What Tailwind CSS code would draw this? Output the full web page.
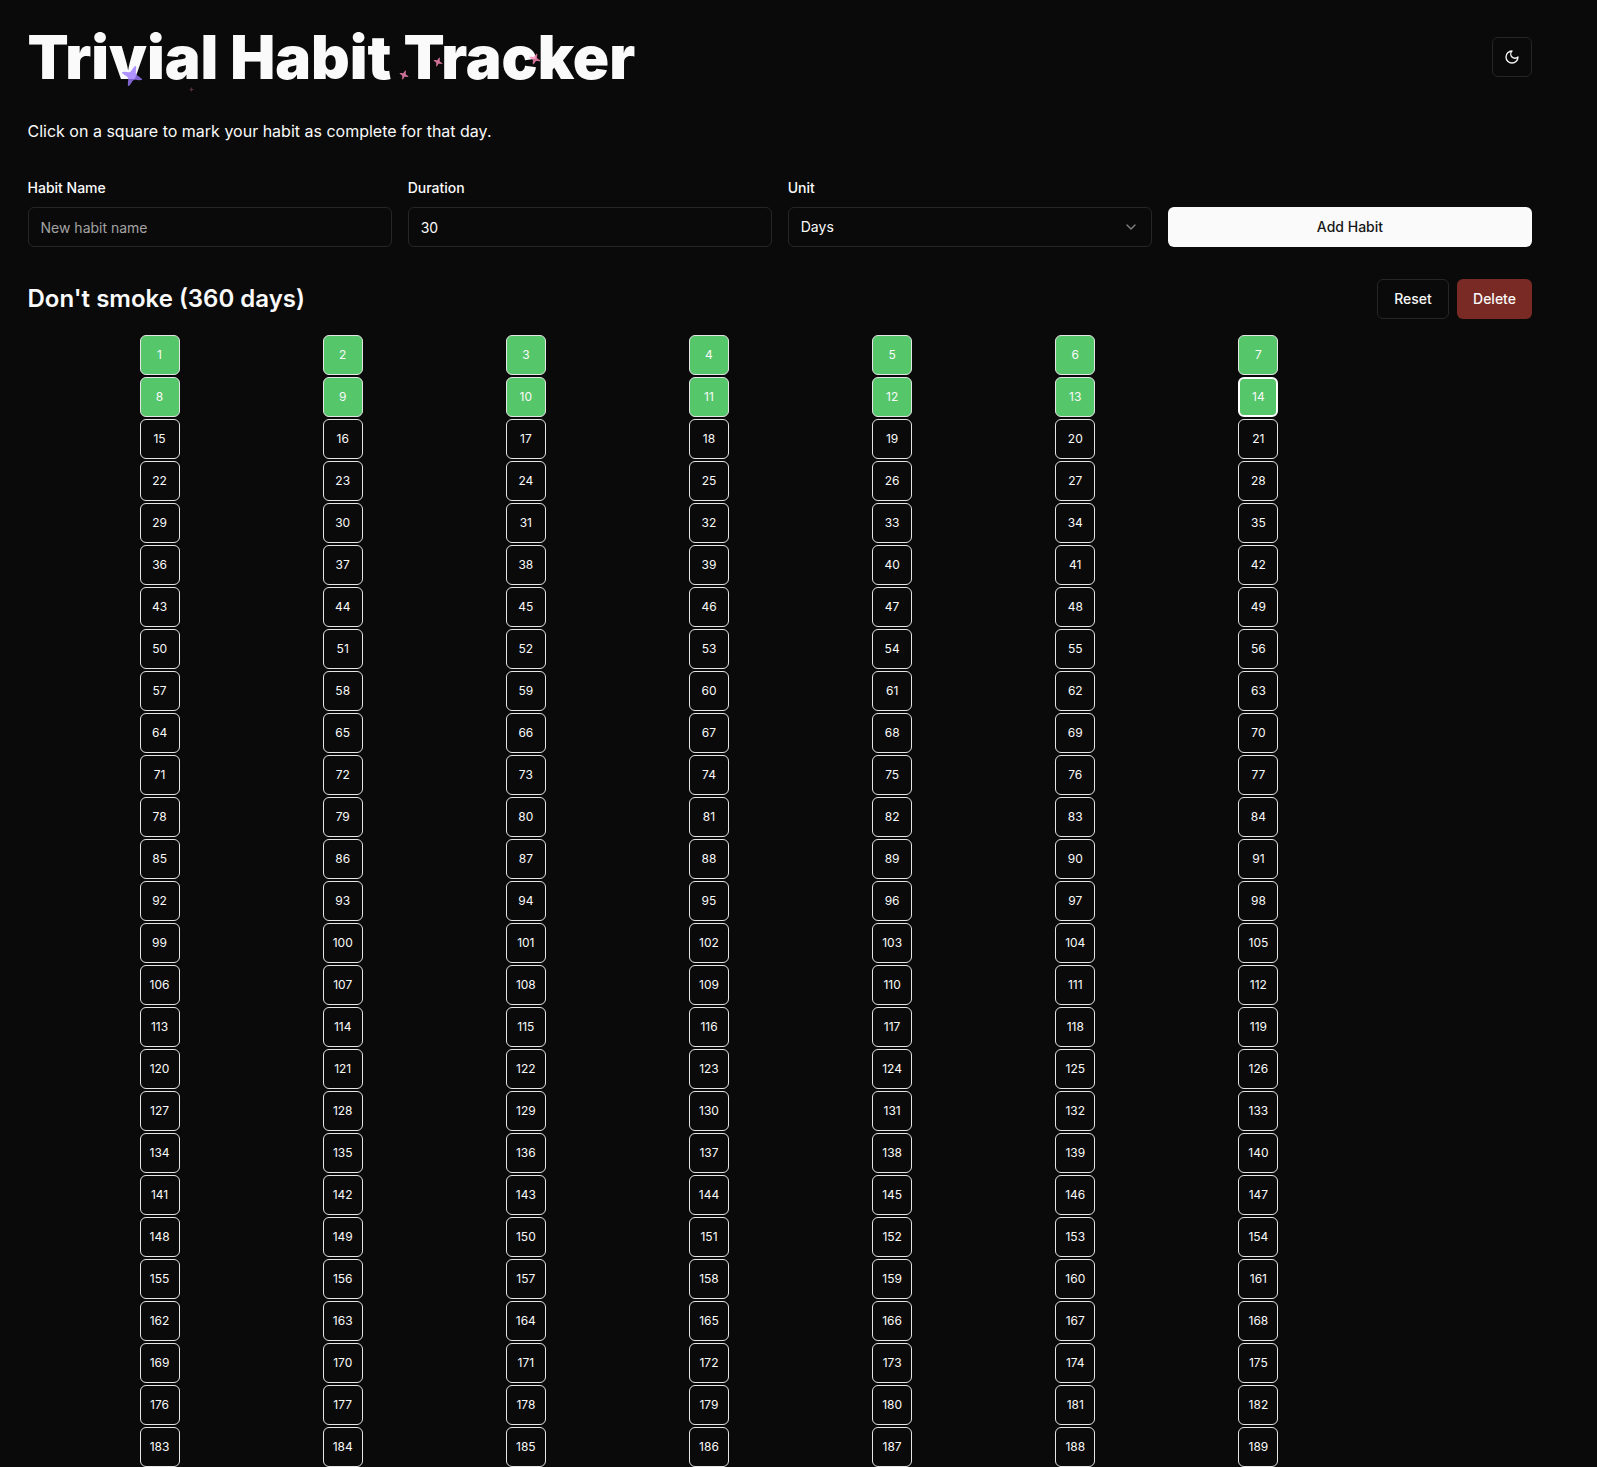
<!DOCTYPE html>
<html lang="en">
<head>
  <meta charset="UTF-8">
  <title>Trivial Habit Tracker</title>
  <meta name="viewport" content="width=device-width, initial-scale=1.0">
  <script src="https://cdn.jsdelivr.net/npm/@tailwindcss/browser@4"></script>
</head>
<body class="bg-[#0a0a0a] text-[#fafafa] font-['Inter',sans-serif] h-screen overflow-hidden">

  <div class="w-[1532px] pl-[27.5px] pt-[17px]">
    <!-- Header -->
    <div class="flex items-start justify-between">
      <div class="relative">
        <h1 class="text-6xl font-black leading-[80px] tracking-normal">Trivial Habit Tracker</h1>
        <svg class="absolute left-[93px] top-[48px] w-[22px] h-[22px] rotate-[20deg] opacity-80" viewBox="0 0 21 21" fill="#9E7AFF"><path d="M9.82531 0.843845C10.0553 0.215178 10.9446 0.215178 11.1746 0.843845L11.8618 2.72026C12.4006 4.19229 12.3916 6.39157 13.5 7.5C14.6084 8.60843 16.8077 8.59935 18.2797 9.13822L20.1561 9.82534C20.7858 10.0553 20.7858 10.9447 20.1561 11.1747L18.2797 11.8618C16.8077 12.4007 14.6084 12.3916 13.5 13.5C12.3916 14.6084 12.4006 16.8077 11.8618 18.2798L11.1746 20.1562C10.9446 20.7858 10.0553 20.7858 9.82531 20.1562L9.13819 18.2798C8.59932 16.8077 8.60843 14.6084 7.5 13.5C6.39157 12.3916 4.19225 12.4007 2.72023 11.8618L0.843814 11.1747C0.215148 10.9447 0.215148 10.0553 0.843814 9.82534L2.72023 9.13822C4.19225 8.59935 6.39157 8.60843 7.5 7.5C8.60843 6.39157 8.59932 4.19229 9.13819 2.72026L9.82531 0.843845Z"/></svg>
        <svg class="absolute left-[371px] top-[53px] w-[10px] h-[10px] rotate-[20deg] opacity-80" viewBox="0 0 21 21" fill="#FE8BBB"><path d="M9.82531 0.843845C10.0553 0.215178 10.9446 0.215178 11.1746 0.843845L11.8618 2.72026C12.4006 4.19229 12.3916 6.39157 13.5 7.5C14.6084 8.60843 16.8077 8.59935 18.2797 9.13822L20.1561 9.82534C20.7858 10.0553 20.7858 10.9447 20.1561 11.1747L18.2797 11.8618C16.8077 12.4007 14.6084 12.3916 13.5 13.5C12.3916 14.6084 12.4006 16.8077 11.8618 18.2798L11.1746 20.1562C10.9446 20.7858 10.0553 20.7858 9.82531 20.1562L9.13819 18.2798C8.59932 16.8077 8.60843 14.6084 7.5 13.5C6.39157 12.3916 4.19225 12.4007 2.72023 11.8618L0.843814 11.1747C0.215148 10.9447 0.215148 10.0553 0.843814 9.82534L2.72023 9.13822C4.19225 8.59935 6.39157 8.60843 7.5 7.5C8.60843 6.39157 8.59932 4.19229 9.13819 2.72026L9.82531 0.843845Z"/></svg>
        <svg class="absolute left-[405px] top-[40px] w-[10px] h-[10px] rotate-[20deg] opacity-80" viewBox="0 0 21 21" fill="#FE8BBB"><path d="M9.82531 0.843845C10.0553 0.215178 10.9446 0.215178 11.1746 0.843845L11.8618 2.72026C12.4006 4.19229 12.3916 6.39157 13.5 7.5C14.6084 8.60843 16.8077 8.59935 18.2797 9.13822L20.1561 9.82534C20.7858 10.0553 20.7858 10.9447 20.1561 11.1747L18.2797 11.8618C16.8077 12.4007 14.6084 12.3916 13.5 13.5C12.3916 14.6084 12.4006 16.8077 11.8618 18.2798L11.1746 20.1562C10.9446 20.7858 10.0553 20.7858 9.82531 20.1562L9.13819 18.2798C8.59932 16.8077 8.60843 14.6084 7.5 13.5C6.39157 12.3916 4.19225 12.4007 2.72023 11.8618L0.843814 11.1747C0.215148 10.9447 0.215148 10.0553 0.843814 9.82534L2.72023 9.13822C4.19225 8.59935 6.39157 8.60843 7.5 7.5C8.60843 6.39157 8.59932 4.19229 9.13819 2.72026L9.82531 0.843845Z"/></svg>
        <svg class="absolute left-[501px] top-[36px] w-[12px] h-[12px] rotate-[20deg] opacity-80" viewBox="0 0 21 21" fill="#FE8BBB"><path d="M9.82531 0.843845C10.0553 0.215178 10.9446 0.215178 11.1746 0.843845L11.8618 2.72026C12.4006 4.19229 12.3916 6.39157 13.5 7.5C14.6084 8.60843 16.8077 8.59935 18.2797 9.13822L20.1561 9.82534C20.7858 10.0553 20.7858 10.9447 20.1561 11.1747L18.2797 11.8618C16.8077 12.4007 14.6084 12.3916 13.5 13.5C12.3916 14.6084 12.4006 16.8077 11.8618 18.2798L11.1746 20.1562C10.9446 20.7858 10.0553 20.7858 9.82531 20.1562L9.13819 18.2798C8.59932 16.8077 8.60843 14.6084 7.5 13.5C6.39157 12.3916 4.19225 12.4007 2.72023 11.8618L0.843814 11.1747C0.215148 10.9447 0.215148 10.0553 0.843814 9.82534L2.72023 9.13822C4.19225 8.59935 6.39157 8.60843 7.5 7.5C8.60843 6.39157 8.59932 4.19229 9.13819 2.72026L9.82531 0.843845Z"/></svg>
        <svg class="absolute left-[161px] top-[70px] w-[5px] h-[5px] opacity-30" viewBox="0 0 21 21" fill="#FE8BBB"><path d="M9.82531 0.843845C10.0553 0.215178 10.9446 0.215178 11.1746 0.843845L11.8618 2.72026C12.4006 4.19229 12.3916 6.39157 13.5 7.5C14.6084 8.60843 16.8077 8.59935 18.2797 9.13822L20.1561 9.82534C20.7858 10.0553 20.7858 10.9447 20.1561 11.1747L18.2797 11.8618C16.8077 12.4007 14.6084 12.3916 13.5 13.5C12.3916 14.6084 12.4006 16.8077 11.8618 18.2798L11.1746 20.1562C10.9446 20.7858 10.0553 20.7858 9.82531 20.1562L9.13819 18.2798C8.59932 16.8077 8.60843 14.6084 7.5 13.5C6.39157 12.3916 4.19225 12.4007 2.72023 11.8618L0.843814 11.1747C0.215148 10.9447 0.215148 10.0553 0.843814 9.82534L2.72023 9.13822C4.19225 8.59935 6.39157 8.60843 7.5 7.5C8.60843 6.39157 8.59932 4.19229 9.13819 2.72026L9.82531 0.843845Z"/></svg>
      </div>
      <button class="mt-[20px] w-10 h-10 flex items-center justify-center rounded-md border border-[#262626]">
        <svg class="w-4 h-4" viewBox="0 0 24 24" fill="none" stroke="currentColor" stroke-width="2" stroke-linecap="round" stroke-linejoin="round"><path d="M12 3a6 6 0 0 0 9 9 9 9 0 1 1-9-9Z"/></svg>
      </button>
    </div>

    <p class="mt-[22px] text-base leading-6">Click on a square to mark your habit as complete for that day.</p>

    <!-- Form -->
    <div class="mt-[38px] grid grid-cols-4 gap-4 items-end">
      <div>
        <label class="block text-sm font-medium leading-[14px] mb-[12px]">Habit Name</label>
        <input type="text" placeholder="New habit name" class="w-full h-10 px-3 rounded-md border border-[#262626] bg-transparent text-sm placeholder:text-[#a3a3a3]">
      </div>
      <div>
        <label class="block text-sm font-medium leading-[14px] mb-[12px]">Duration</label>
        <input type="number" value="30" class="w-full h-10 px-3 rounded-md border border-[#262626] bg-transparent text-sm">
      </div>
      <div>
        <label class="block text-sm font-medium leading-[14px] mb-[12px]">Unit</label>
        <div class="h-10 px-3 flex items-center justify-between rounded-md border border-[#262626] text-sm">
          <span>Days</span>
          <svg class="w-4 h-4 opacity-50" viewBox="0 0 24 24" fill="none" stroke="currentColor" stroke-width="2" stroke-linecap="round" stroke-linejoin="round"><path d="m6 9 6 6 6-6"/></svg>
        </div>
      </div>
      <button class="h-10 rounded-md bg-[#fafafa] text-[#171717] text-sm font-medium">Add Habit</button>
    </div>

    <!-- Habit -->
    <div class="mt-[32px] flex items-center justify-between">
      <h2 class="text-2xl font-semibold">Don't smoke (360 days)</h2>
      <div class="flex gap-2">
        <button class="h-10 w-[72px] rounded-md border border-[#262626] text-sm font-medium">Reset</button>
        <button class="h-10 w-[75px] rounded-md bg-[#7a2a24] text-sm font-medium">Delete</button>
      </div>
    </div>

    <div id="grid" class="mt-[16px] ml-[40.5px] w-[1282px] grid grid-cols-7 gap-y-[2px] justify-items-center"></div>
  </div>

  <script>
    const grid = document.getElementById("grid");
    for (let day = 1; day <= 360; day++) {
      const cell = document.createElement("button");
      cell.textContent = day;
      if (day === 14) {
        cell.className = "w-10 h-10 rounded-md text-xs border-2 border-white bg-[#56c66b]";
      } else if (day < 14) {
        cell.className = "w-10 h-10 rounded-md text-xs border border-[#e5e5e5] bg-[#56c66b]";
      } else {
        cell.className = "w-10 h-10 rounded-md text-xs border border-[#e5e5e5]";
      }
      grid.appendChild(cell);
    }
  </script>

</body>
</html>
